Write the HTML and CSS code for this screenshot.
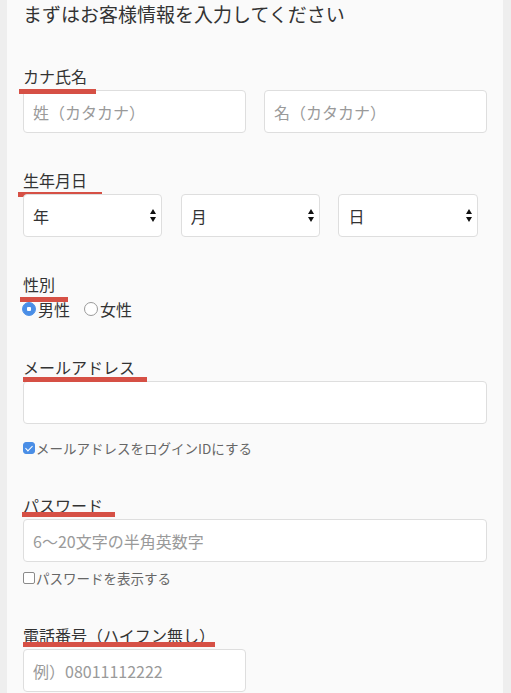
FILE: index.html
```html
<!DOCTYPE html>
<html lang="ja">
<head>
    <meta charset="UTF-8">
    <meta name="viewport" content="width=device-width, initial-scale=1.0">
    <title>会員登録</title>
    <link rel="stylesheet" href="styles.css">
</head>
<body>
    <div class="page">
        <h1 class="title">まずはお客様情報を入力してください</h1>

        <div class="field">
            <label class="label mark-kana">カナ氏名</label>
            <div class="row-2">
                <input class="text-input" type="text" placeholder="姓（カタカナ）">
                <input class="text-input" type="text" placeholder="名（カタカナ）">
            </div>
        </div>

        <div class="field">
            <label class="label mark-birth">生年月日</label>
            <div class="row-3">
                <div class="select-wrap">
                    <select class="select"><option>年</option></select>
                    <svg class="arrows" width="6" height="13" viewBox="0 0 6 13"><path d="M3 0L6 5H0Z M0 8H6L3 13Z" fill="#111"/></svg>
                </div>
                <div class="select-wrap">
                    <select class="select"><option>月</option></select>
                    <svg class="arrows" width="6" height="13" viewBox="0 0 6 13"><path d="M3 0L6 5H0Z M0 8H6L3 13Z" fill="#111"/></svg>
                </div>
                <div class="select-wrap">
                    <select class="select"><option>日</option></select>
                    <svg class="arrows" width="6" height="13" viewBox="0 0 6 13"><path d="M3 0L6 5H0Z M0 8H6L3 13Z" fill="#111"/></svg>
                </div>
            </div>
        </div>

        <div class="field">
            <label class="label mark-gender">性別</label>
            <div class="radios">
                <label class="radio"><input type="radio" name="gender" checked>男性</label>
                <label class="radio"><input type="radio" name="gender">女性</label>
            </div>
        </div>

        <div class="field">
            <label class="label mark-mail">メールアドレス</label>
            <input class="text-input" type="email">
            <label class="check check-mail"><input type="checkbox" checked>メールアドレスをログインIDにする</label>
        </div>

        <div class="field">
            <label class="label mark-pass">パスワード</label>
            <input class="text-input" type="password" placeholder="6〜20文字の半角英数字">
            <label class="check check-pass"><input type="checkbox">パスワードを表示する</label>
        </div>

        <div class="field">
            <label class="label mark-tel">電話番号（ハイフン無し）</label>
            <input class="text-input half" type="tel" placeholder="例）08011112222">
        </div>
    </div>
</body>
</html>
```

FILE: styles.css
```css
body {
    font-family: "Noto Sans CJK JP", "Noto Sans", sans-serif;
    margin: 0;
    padding: 0;
    background-color: #eeeeee;
    color: #333;
}

.page {
    margin: 0 8px 0 7px;
    padding: 0 16px;
    background-color: #fafafa;
    min-height: 693px;
}

.title {
    margin: 0 0 36px;
    font-size: 19px;
    font-weight: normal;
    line-height: 28px;
    color: #333;
}

.field {
    margin-bottom: 35px;
}

.label {
    display: block;
    position: relative;
    font-size: 16px;
    line-height: 24px;
    margin-bottom: 2px;
}

/* red marker under each label */
.label::after {
    content: "";
    position: absolute;
    height: 5px;
    background-color: #d65045;
}

.mark-kana::after { left: -4px; top: 25px; width: 77px; }
.mark-birth::after { left: -5px; top: 24px; width: 84px; }
.mark-gender::after { left: -3px; top: 25px; width: 48px; }
.mark-mail::after { left: 0; top: 22px; width: 124px; }
.mark-pass::after { left: -1px; top: 19px; width: 93px; }
.mark-tel::after { left: 0; top: 19px; width: 192px; }

.text-input {
    display: block;
    box-sizing: border-box;
    width: 100%;
    height: 43px;
    padding: 0 9px;
    border: 1px solid #dedede;
    border-radius: 4px;
    background-color: #fff;
    font-family: inherit;
    font-size: 16px;
    color: #333;
}

.text-input::placeholder {
    color: #9a9a9a;
}

.text-input.half {
    width: calc((100% - 18px) / 2);
}

.row-2 {
    display: grid;
    grid-template-columns: 1fr 1fr;
    column-gap: 18px;
}

.row-3 {
    display: grid;
    grid-template-columns: repeat(3, 30%);
    column-gap: 4%;
}

.select-wrap {
    position: relative;
}

.select {
    appearance: none;
    -webkit-appearance: none;
    display: block;
    box-sizing: border-box;
    width: 100%;
    height: 43px;
    padding: 0 20px 0 9px;
    border: 1px solid #dedede;
    border-radius: 4px;
    background-color: #fff;
    font-family: inherit;
    font-size: 16px;
    color: #333;
}

.arrows {
    position: absolute;
    right: 6px;
    top: 15px;
    pointer-events: none;
}

.radios {
    display: flex;
    gap: 15px;
    font-size: 16px;
    line-height: 22px;
}

.radio {
    display: flex;
    align-items: center;
}

.radio input {
    appearance: none;
    -webkit-appearance: none;
    width: 14px;
    height: 14px;
    margin: 0 2px 0 -1px;
    border: 1px solid #9a9a9a;
    border-radius: 50%;
    background-color: #fff;
    box-sizing: border-box;
}

.radio input:checked {
    border-color: #4a8ee6;
    background: radial-gradient(circle, #fff 0 2px, #4a8ee6 2.5px);
}

.check {
    display: flex;
    align-items: center;
    font-size: 13.5px;
    line-height: 20px;
    color: #666;
}

.check-mail {
    margin-top: 14px;
}

.check-pass {
    margin-top: 6px;
}

.check input {
    appearance: none;
    -webkit-appearance: none;
    position: relative;
    width: 12px;
    height: 12px;
    margin: 0 1px 0 0;
    border: 1px solid #8a8a8a;
    border-radius: 2px;
    background-color: #fff;
    box-sizing: border-box;
}

.check input:checked {
    border-color: #4a8ee6;
    background-color: #4a8ee6;
    border-radius: 3px;
}

.check input:checked::after {
    content: "";
    position: absolute;
    left: 3px;
    top: 1px;
    width: 3px;
    height: 6px;
    border: solid #fff;
    border-width: 0 1.5px 1.5px 0;
    transform: rotate(45deg);
}
```
